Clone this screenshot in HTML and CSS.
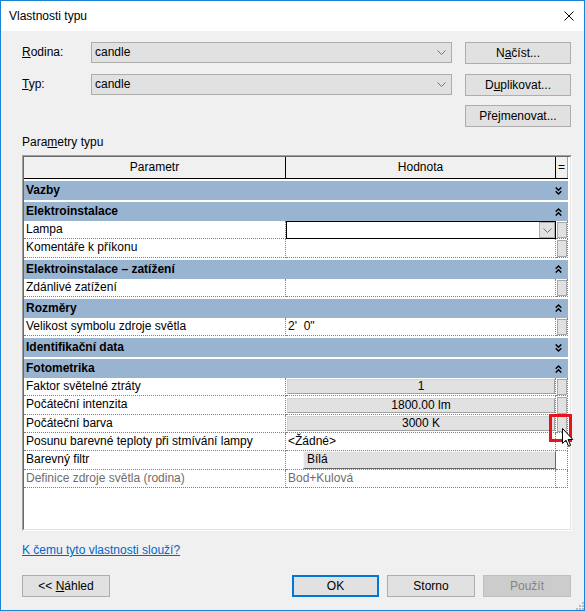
FILE: index.html
```html
<!DOCTYPE html>
<html lang="cs">
<head>
<meta charset="utf-8">
<title>Vlastnosti typu</title>
<link rel="stylesheet" href="styles.css">
</head>
<body>
<svg width="0" height="0" class="defs" aria-hidden="true">
  <defs>
    <symbol id="chev-up" viewBox="0 0 7 8"><path d="M0.7 3.8 L3.5 1 L6.3 3.8 M0.7 7.6 L3.5 4.8 L6.3 7.6" fill="none" stroke="#000" stroke-width="1.4"/></symbol>
    <symbol id="chev-down" viewBox="0 0 7 8"><path d="M0.7 0.4 L3.5 3.2 L6.3 0.4 M0.7 4.2 L3.5 7 L6.3 4.2" fill="none" stroke="#000" stroke-width="1.4"/></symbol>
    <symbol id="dd" viewBox="0 0 9 5"><path d="M0.5 0.5 L4.5 4.5 L8.5 0.5" fill="none" stroke="#707070" stroke-width="1"/></symbol>
  </defs>
</svg>
<div class="window">
  <div class="titlebar">
    <span class="title">Vlastnosti typu</span>
    <svg class="close" width="10" height="10" viewBox="0 0 10 10"><path d="M0.5 0.5 L9.5 9.5 M9.5 0.5 L0.5 9.5" stroke="#000" stroke-width="1"/></svg>
  </div>
  <div class="content">
    <div class="top">
      <span class="lbl"><u>R</u>odina:</span>
      <div class="combo"><span>candle</span><svg width="9" height="5"><use href="#dd"/></svg></div>
      <button class="btn"><span>N<u>a</u>číst...</span></button>
      <span class="lbl"><u>T</u>yp:</span>
      <div class="combo"><span>candle</span><svg width="9" height="5"><use href="#dd"/></svg></div>
      <button class="btn">D<u>u</u>plikovat...</button>
      <span></span>
      <span></span>
      <button class="btn">Pře<u>j</u>menovat...</button>
    </div>

    <div class="section">Para<u>m</u>etry typu</div>

    <div class="frame">
      <div class="frame-in">
        <div class="hdr">
          <div>Parametr</div>
          <div>Hodnota</div>
          <div>=</div>
        </div>

        <div class="band"><span>Vazby</span><svg width="7" height="8"><use href="#chev-down"/></svg></div>
        <div class="band"><span>Elektroinstalace</span><svg width="7" height="8"><use href="#chev-up"/></svg></div>
        <div class="row">
          <div class="p">Lampa</div>
          <div class="v nob"><div class="vcombo"><span></span><span class="vdd"><svg width="9" height="5"><use href="#dd"/></svg></span></div></div>
          <div class="e"><div class="mini"></div></div>
        </div>
        <div class="row">
          <div class="p">Komentáře k příkonu</div>
          <div class="v"></div>
          <div class="e"><div class="mini"></div></div>
        </div>

        <div class="band"><span>Elektroinstalace – zatížení</span><svg width="7" height="8"><use href="#chev-up"/></svg></div>
        <div class="row">
          <div class="p">Zdánlivé zatížení</div>
          <div class="v"></div>
          <div class="e"><div class="mini"></div></div>
        </div>

        <div class="band"><span>Rozměry</span><svg width="7" height="8"><use href="#chev-up"/></svg></div>
        <div class="row">
          <div class="p">Velikost symbolu zdroje světla</div>
          <div class="v txt">2'&nbsp; 0"</div>
          <div class="e"><div class="mini"></div></div>
        </div>

        <div class="band"><span>Identifikační data</span><svg width="7" height="8"><use href="#chev-down"/></svg></div>
        <div class="band"><span>Fotometrika</span><svg width="7" height="8"><use href="#chev-up"/></svg></div>
        <div class="row">
          <div class="p">Faktor světelné ztráty</div>
          <div class="v"><div class="vbtn">1</div></div>
          <div class="e"><div class="mini"></div></div>
        </div>
        <div class="row">
          <div class="p">Počáteční intenzita</div>
          <div class="v"><div class="vbtn">1800.00 lm</div></div>
          <div class="e"><div class="mini"></div></div>
        </div>
        <div class="row">
          <div class="p">Počáteční barva</div>
          <div class="v"><div class="vbtn">3000 K</div></div>
          <div class="e"><div class="mini"></div></div>
        </div>
        <div class="row">
          <div class="p">Posunu barevné teploty při stmívání lampy</div>
          <div class="v txt">&lt;Žádné&gt;</div>
          <div class="e"></div>
        </div>
        <div class="row">
          <div class="p">Barevný filtr</div>
          <div class="v color"><span class="swatch"></span><div class="vbtn left">Bílá</div></div>
          <div class="e"></div>
        </div>
        <div class="row dis">
          <div class="p">Definice zdroje světla (rodina)</div>
          <div class="v txt">Bod+Kulová</div>
          <div class="e"></div>
        </div>
      </div>
    </div>

    <a class="help" href="#">K čemu tyto vlastnosti slouží?</a>

    <div class="footer">
      <button class="btn fbtn"><span>&lt;&lt; <u>N</u>áhled</span></button>
      <div class="fright">
        <button class="btn fbtn ok">OK</button>
        <button class="btn fbtn">Storno</button>
        <button class="btn fbtn disabled">Použít</button>
      </div>
    </div>
  </div>

  <svg class="grip" width="8" height="8" viewBox="0 0 8 8">
    <rect x="6" y="0" width="2" height="2" fill="#bcbcbc"/>
    <rect x="3" y="3" width="2" height="2" fill="#bcbcbc"/>
    <rect x="6" y="3" width="2" height="2" fill="#bcbcbc"/>
    <rect x="0" y="6" width="2" height="2" fill="#bcbcbc"/>
    <rect x="3" y="6" width="2" height="2" fill="#bcbcbc"/>
    <rect x="6" y="6" width="2" height="2" fill="#bcbcbc"/>
  </svg>

  <div class="highlight"></div>
  <svg class="cursor" width="12" height="20" viewBox="0 0 12 20">
    <path d="M0.5 0.5 L0.5 15.5 L4 12.2 L6.6 18.3 L8.6 17.4 L6.1 11.5 L10.8 11.5 Z" fill="#fff" stroke="#000" stroke-width="1"/>
  </svg>
</div>
</body>
</html>
```

FILE: styles.css
```css
* { box-sizing: border-box; }
html, body { margin: 0; padding: 0; }
body {
  font-family: "Liberation Sans", Arial, sans-serif;
  font-size: 12px;
  color: #000;
  background: #fff;
}
.defs { position: absolute; width: 0; height: 0; }

.window {
  position: relative;
  width: 585px;
  height: 611px;
  border: 1px solid #1883d7;
  background: #f0f0f0;
  overflow: hidden;
}

.titlebar {
  height: 30px;
  background: #fff;
  display: flex;
  align-items: center;
  justify-content: space-between;
  padding: 0 10px 0 8px;
  line-height: 30px;
}
.close { display: block; }

.content {
  padding: 11px 13px 0 21px;
}

.top {
  display: grid;
  grid-template-columns: 69px 374px 106px;
  grid-template-rows: 32px 31px 22px;
}
.lbl { line-height: 21px; }
.combo {
  width: 361px;
  height: 21px;
  background: #e1e1e1;
  border: 1px solid #adadad;
  display: flex;
  align-items: center;
  justify-content: space-between;
  padding: 0 5px 0 3px;
  line-height: 19px;
}
.combo svg { display: block; }

.btn {
  font-family: inherit;
  font-size: 12px;
  color: #000;
  height: 22px;
  background: #e1e1e1;
  border: 1px solid #adadad;
  padding: 0;
  margin: 0;
  text-align: center;
  line-height: 20px;
}
.top .btn { width: 106px; }

.section {
  margin-top: 8px;
  line-height: 14px;
}

.frame {
  margin-top: 6px;
  width: 550px;
  height: 376px;
  border: 1px solid;
  border-color: #a0a0a0 #ffffff #ffffff #a0a0a0;
}
.frame-in {
  height: 100%;
  border: 1px solid;
  border-color: #696969 #e3e3e3 #e3e3e3 #696969;
  background: #fff;
}

.hdr {
  display: grid;
  grid-template-columns: 262px 270px 12px;
  height: 22px;
  background: #f0f0f0;
  border-bottom: 1px solid #000;
  width: 544px;
}
.hdr > div {
  border-right: 1px solid #000;
  text-align: center;
  line-height: 21px;
}
.hdr > div:last-child { border-right-color: #a0a0a0; }

.band {
  margin-top: 2px;
  height: 19px;
  width: 544px;
  background: #99b4d1;
  display: flex;
  align-items: center;
  justify-content: space-between;
  padding: 0 6px 0 2px;
  font-weight: bold;
  line-height: 19px;
  white-space: nowrap;
}
.band svg { display: block; }

.row {
  display: grid;
  grid-template-columns: 262px 270px 12px;
  height: 18.3px;
}
.row > div {
  border-right: 1px dotted #808080;
  border-bottom: 1px dotted #808080;
  line-height: 17px;
  white-space: nowrap;
  overflow: visible;
}
.row .p { padding-left: 2px; }
.row .txt { padding-left: 2px; }
.row.dis > div { color: #6d6d6d; }

.row .v {
  display: flex;
  align-items: center;
}
.row .v.nob {
  border: none;
  align-items: stretch;
}
.vcombo {
  flex: 1;
  border: 1px solid #000;
  background: #fff;
  display: flex;
  justify-content: space-between;
}
.vdd {
  width: 16px;
  background: #e1e1e1;
  border: 1px solid #adadad;
  display: flex;
  align-items: center;
  justify-content: center;
}
.vdd svg { display: block; }

.vbtn {
  margin-left: 1px;
  width: 268px;
  height: 15px;
  background: #e1e1e1;
  border: 1px solid;
  border-color: #d4d4d4 #a0a0a0 #a0a0a0 #d4d4d4;
  text-align: center;
  line-height: 13px;
}
.row .v.color {
  align-items: stretch;
}
.swatch {
  width: 17px;
  background: #fff;
}
.vbtn.left {
  margin-left: 0;
  width: auto;
  flex: 1;
  height: auto;
  margin-right: -1px;
  text-align: left;
  padding-left: 3px;
  line-height: 15px;
  border-color: #f4f4f4 #696969 #696969 #f4f4f4;
}

.row .e { padding: 1px 0 0 1px; }
.mini {
  width: 10px;
  height: 100%;
  background: #e1e1e1;
  border: 1px solid #a8a8a8;
}

.help {
  display: inline-block;
  margin-top: 12px;
  line-height: 14px;
  color: #0066cc;
  text-decoration: underline;
}

.footer {
  margin-top: 18px;
  display: flex;
  justify-content: space-between;
  width: 549px;
}
.fbtn { width: 88px; }
.fright { display: flex; gap: 8px; }
.ok {
  width: 87px;
  border: 2px solid #0078d7;
  line-height: 18px;
}
.disabled {
  background: #cccccc;
  border-color: #bfbfbf;
  color: #838383;
}

.grip {
  position: absolute;
  right: 0;
  bottom: 0;
  display: block;
}

.highlight {
  position: absolute;
  left: 548px;
  top: 413px;
  width: 23px;
  height: 28px;
  border: 3px solid #e8141c;
}
.cursor {
  position: absolute;
  left: 561px;
  top: 427px;
  display: block;
}
```
